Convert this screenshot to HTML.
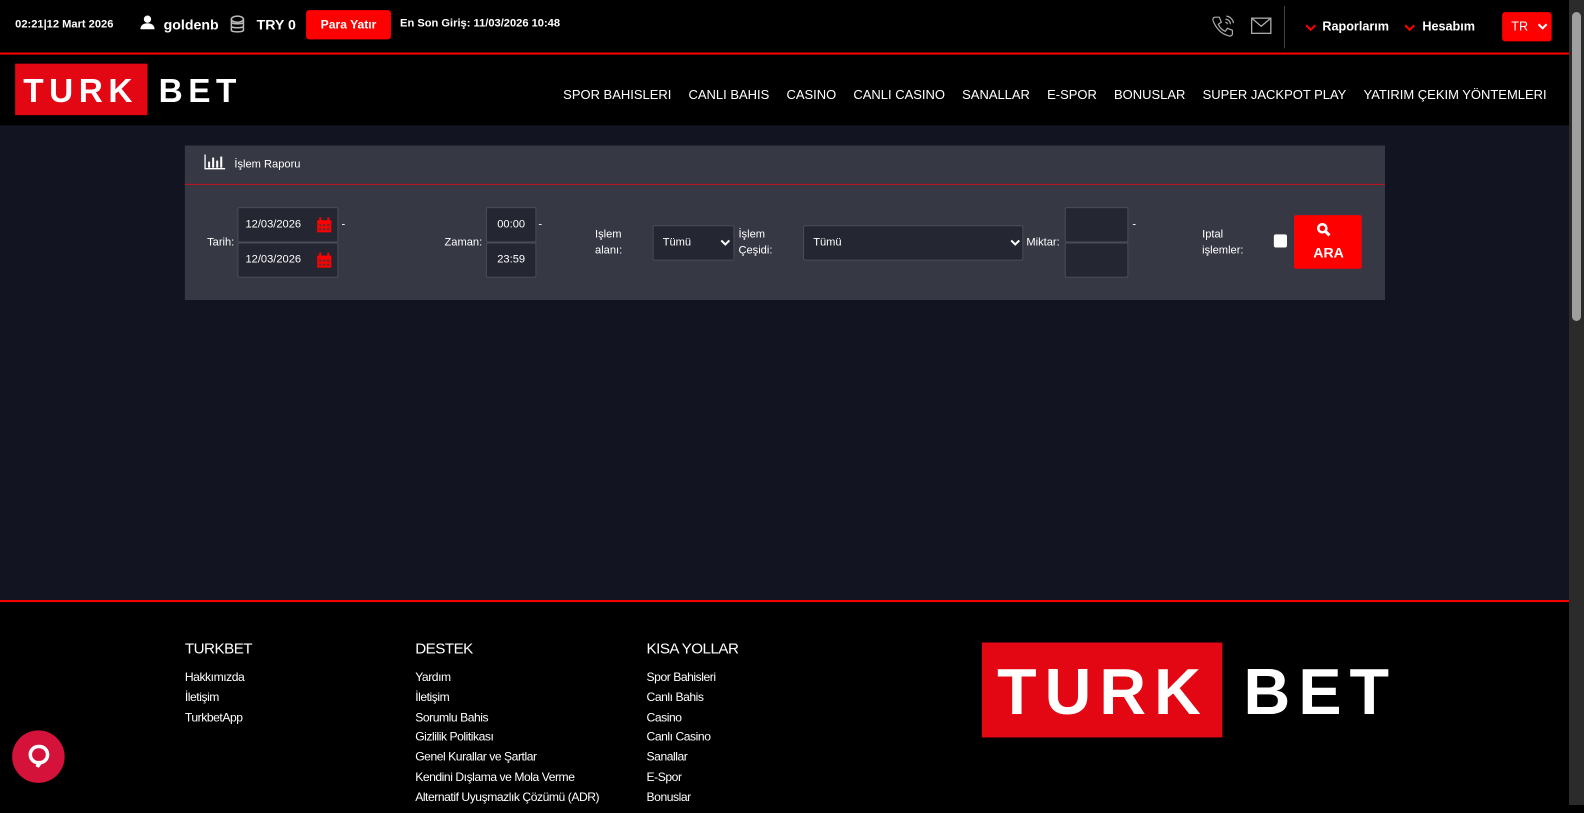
<!DOCTYPE html>
<html><head><meta charset="utf-8"><style>
*{margin:0;padding:0;box-sizing:border-box}
body{width:1584px;height:805px;overflow:hidden;background:#000;font-family:"Liberation Sans",Arial,sans-serif;color:#fff;position:relative}
#w{position:absolute;left:0;top:0;width:1569px;height:805px;transform:scale(1.0102);transform-origin:0 0}
.a{position:absolute;white-space:nowrap}
.b{font-weight:bold}
.inp{position:absolute;background:#242631;border:1px solid #4a4c57;border-radius:2px;font-size:11px;color:#fff}
.lbl{position:absolute;font-size:11px;color:#fff;line-height:16px}
.nav span{margin-left:17px}
.fh{font-size:15px;position:absolute;letter-spacing:-.5px}
.fl{position:absolute;font-size:12px;line-height:19.8px;letter-spacing:-.45px}
.logo{position:absolute;font-weight:bold;color:#fff}
</style></head><body>
<div id="w">
<div class="a b" style="left:15px;top:18px;font-size:11px">02:21|12 Mart 2026</div>
<svg class="a" style="left:138px;top:14px" width="16" height="16" viewBox="0 0 16 16"><circle cx="8" cy="5" r="3.6" fill="#fff"/><path d="M1 15c0-4 3-6 7-6s7 2 7 6z" fill="#fff"/></svg>
<div class="a b" style="left:162px;top:16px;font-size:14px">goldenb</div>
<svg class="a" style="left:226px;top:14px" width="18" height="20" viewBox="0 0 18 20"><g fill="none" stroke="#bbb" stroke-width="1.5"><ellipse cx="9" cy="5" rx="6" ry="3"/><path d="M3 5v3c0 2 12 2 12 0V5M3 9v3c0 2 12 2 12 0V9M3 13v3c0 2 12 2 12 0v-3"/></g></svg>
<div class="a b" style="left:254px;top:16px;font-size:14px">TRY 0</div>
<div class="a b" style="left:303px;top:10px;width:84px;height:29px;background:#f00;border-radius:3px;font-size:12px;text-align:center;line-height:29px">Para Yatır</div>
<div class="a b" style="left:396px;top:17px;font-size:11px">En Son Giriş: 11/03/2026 10:48</div>
<svg class="a" style="left:1198px;top:14px" width="26" height="26" viewBox="0 0 26 26"><path d="M5 3l4 0 2 5-3 2c1 3 4 6 7 7l2-3 5 2v4c-1 2-3 2-5 1C10 19 6 14 3 7 2 5 3 3 5 3z" fill="none" stroke="#aaa" stroke-width="1.2"/><path d="M15 5a5 5 0 0 1 5 5M16 2a8 8 0 0 1 7 7M15 8a2 2 0 0 1 2 2" fill="none" stroke="#aaa" stroke-width="1.2"/></svg>
<svg class="a" style="left:1238px;top:17px" width="21" height="17" viewBox="0 0 21 17"><rect x="1" y="1" width="19" height="15" fill="none" stroke="#aaa" stroke-width="1.3"/><path d="M1 1l9.5 8L20 1" fill="none" stroke="#aaa" stroke-width="1.3"/></svg>
<div class="a" style="left:1271px;top:6px;width:1px;height:42px;background:#444"></div>
<svg class="a" style="left:1292px;top:24px" width="11" height="7" viewBox="0 0 11 7"><path d="M1 1l4.5 4.5L10 1" fill="none" stroke="#f00" stroke-width="2"/></svg>
<div class="a b" style="left:1309px;top:19px;font-size:12.5px">Raporlarım</div>
<svg class="a" style="left:1390px;top:24px" width="11" height="7" viewBox="0 0 11 7"><path d="M1 1l4.5 4.5L10 1" fill="none" stroke="#f00" stroke-width="2"/></svg>
<div class="a b" style="left:1408px;top:19px;font-size:12.5px">Hesabım</div>
<div class="a" style="left:1487px;top:12px;width:49px;height:29px;background:#f00;border-radius:3px;font-size:12.5px;line-height:29px;padding-left:9px">TR<svg style="position:absolute;left:35px;top:11px" width="10" height="7" viewBox="0 0 10 7"><path d="M1 1l4 4 4-4" fill="none" stroke="#fff" stroke-width="2"/></svg></div>
<div class="a" style="left:0;top:52px;width:1569px;height:2px;background:#f00"></div>
<div class="a" style="left:15px;top:63px;width:131px;height:51px;background:#e30613"></div>
<div class="logo" style="left:23px;top:71px;font-size:33px;letter-spacing:5.5px">TURK</div>
<div class="logo" style="left:157px;top:71px;font-size:33px;letter-spacing:5.5px">BET</div>
<div class="a nav" style="right:38px;top:86px;font-size:12.85px"><span>SPOR BAHISLERI</span><span>CANLI BAHIS</span><span>CASINO</span><span>CANLI CASINO</span><span>SANALLAR</span><span>E-SPOR</span><span>BONUSLAR</span><span>SUPER JACKPOT PLAY</span><span>YATIRIM ÇEKIM YÖNTEMLERI</span></div>
<div class="a" style="left:0;top:124px;width:1569px;height:470px;background:#121521"></div>
<div class="a" style="left:183px;top:144px;width:1188px;height:153px;background:#363844"></div>
<div class="a" style="left:183px;top:182px;width:1188px;height:1px;background:#c4161c"></div>
<svg class="a" style="left:202px;top:153px" width="21" height="15" viewBox="0 0 21 15"><path d="M1 0v14h20" fill="none" stroke="#fff" stroke-width="1.3"/><rect x="4" y="7" width="2" height="6" fill="#fff"/><rect x="8" y="3" width="2" height="10" fill="#fff"/><rect x="12" y="6" width="2" height="7" fill="#fff"/><rect x="16" y="2" width="2" height="11" fill="#fff"/></svg>
<div class="a" style="left:232px;top:157px;font-size:11px">İşlem Raporu</div>
<div class="lbl" style="left:205px;top:232px">Tarih:</div>
<div class="inp" style="left:235px;top:205px;width:100px;height:35px;line-height:33px;padding-left:7px">12/03/2026</div>
<div class="inp" style="left:235px;top:240px;width:100px;height:35px;line-height:33px;padding-left:7px">12/03/2026</div>
<svg class="a" style="left:313px;top:215px" width="16" height="16" viewBox="0 0 16 16"><rect x="1" y="3" width="14" height="12" fill="#f00"/><rect x="3" y="0" width="2" height="4" fill="#f00"/><rect x="11" y="0" width="2" height="4" fill="#f00"/><g fill="#363844"><rect x="3" y="7" width="2" height="2"/><rect x="7" y="7" width="2" height="2"/><rect x="11" y="7" width="2" height="2"/><rect x="3" y="11" width="2" height="2"/><rect x="7" y="11" width="2" height="2"/><rect x="11" y="11" width="2" height="2"/></g></svg>
<svg class="a" style="left:313px;top:250px" width="16" height="16" viewBox="0 0 16 16"><rect x="1" y="3" width="14" height="12" fill="#f00"/><rect x="3" y="0" width="2" height="4" fill="#f00"/><rect x="11" y="0" width="2" height="4" fill="#f00"/><g fill="#363844"><rect x="3" y="7" width="2" height="2"/><rect x="7" y="7" width="2" height="2"/><rect x="11" y="7" width="2" height="2"/><rect x="3" y="11" width="2" height="2"/><rect x="7" y="11" width="2" height="2"/><rect x="11" y="11" width="2" height="2"/></g></svg>
<div class="lbl" style="left:338px;top:214px">-</div>
<div class="lbl" style="left:440px;top:232px">Zaman:</div>
<div class="inp" style="left:481px;top:205px;width:50px;height:35px;line-height:33px;text-align:center">00:00</div>
<div class="inp" style="left:481px;top:240px;width:50px;height:35px;line-height:33px;text-align:center">23:59</div>
<div class="lbl" style="left:533px;top:214px">-</div>
<div class="lbl" style="left:589px;top:224px">Işlem<br>alanı:</div>
<div class="inp" style="left:646px;top:223px;width:81px;height:35px;line-height:33px;padding-left:9px">Tümü<svg style="position:absolute;left:66px;top:13px" width="10" height="7" viewBox="0 0 10 7"><path d="M1 1l4 4 4-4" fill="none" stroke="#fff" stroke-width="2"/></svg></div>
<div class="lbl" style="left:731px;top:224px">İşlem<br>Çeşidi:</div>
<div class="inp" style="left:795px;top:223px;width:218px;height:35px;line-height:33px;padding-left:9px">Tümü<svg style="position:absolute;left:204px;top:13px" width="10" height="7" viewBox="0 0 10 7"><path d="M1 1l4 4 4-4" fill="none" stroke="#fff" stroke-width="2"/></svg></div>
<div class="lbl" style="left:1016px;top:232px">Miktar:</div>
<div class="inp" style="left:1054px;top:205px;width:63px;height:35px"></div>
<div class="inp" style="left:1054px;top:240px;width:63px;height:35px"></div>
<div class="lbl" style="left:1121px;top:214px">-</div>
<div class="lbl" style="left:1190px;top:224px">Iptal<br>işlemler:</div>
<div class="a" style="left:1261px;top:232px;width:13px;height:13px;background:#fff;border-radius:2px"></div>
<div class="a" style="left:1281px;top:213px;width:67px;height:53px;background:#f00;border-radius:2px"></div>
<svg class="a" style="left:1303px;top:220px" width="15" height="15" viewBox="0 0 15 15"><circle cx="6" cy="6" r="4" fill="none" stroke="#fff" stroke-width="2.5"/><path d="M9 9l4 4" stroke="#fff" stroke-width="3"/></svg>
<div class="a b" style="left:1300px;top:242px;font-size:14px">ARA</div>
<div class="a" style="left:0;top:594px;width:1569px;height:2px;background:#f00"></div>
<div class="fh" style="left:183px;top:634px">TURKBET</div>
<div class="fl" style="left:183px;top:661px">Hakkımızda<br>İletişim<br>TurkbetApp</div>
<div class="fh" style="left:411px;top:634px">DESTEK</div>
<div class="fl" style="left:411px;top:661px">Yardım<br>İletişim<br>Sorumlu Bahis<br>Gizlilik Politikası<br>Genel Kurallar ve Şartlar<br>Kendini Dışlama ve Mola Verme<br>Alternatif Uyuşmazlık Çözümü (ADR)</div>
<div class="fh" style="left:640px;top:634px">KISA YOLLAR</div>
<div class="fl" style="left:640px;top:661px">Spor Bahisleri<br>Canlı Bahis<br>Casino<br>Canlı Casino<br>Sanallar<br>E-Spor<br>Bonuslar</div>
<div class="a" style="left:972px;top:636px;width:238px;height:94px;background:#e30613"></div>
<div class="logo" style="left:987px;top:648px;font-size:64px;letter-spacing:8px">TURK</div>
<div class="logo" style="left:1231px;top:648px;font-size:64px;letter-spacing:8px">BET</div>
<div class="a" style="left:12px;top:723px;width:52px;height:52px;border-radius:50%;background:#d4123a"></div>
<svg class="a" style="left:27px;top:737px" width="22" height="24" viewBox="0 0 22 24"><path d="M11 2a8 8 0 1 0 0 16l-1 4 3-4a8 8 0 0 0-2-16z" fill="none" stroke="#fff" stroke-width="3.5"/></svg>
</div>
<div class="a" style="left:1569px;top:0;width:15px;height:805px;background:#2b2b2b"></div>
<div class="a" style="left:1572px;top:12px;width:9px;height:309px;background:#9f9f9f;border-radius:5px"></div>
</body></html>
